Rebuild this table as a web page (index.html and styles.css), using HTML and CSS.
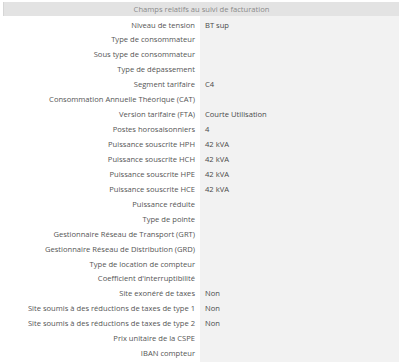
FILE: index.html
```html
<!DOCTYPE html>
<html lang="fr">
<head>
<meta charset="utf-8">
<link rel="stylesheet" href="styles.css">
</head>
<body>
<div class="panel">
  <div class="panel-header">Champs relatifs au suivi de facturation</div>
  <div class="fields">
    <div class="label">Niveau de tension</div><div class="value">BT sup</div>
    <div class="label">Type de consommateur</div><div class="value"></div>
    <div class="label">Sous type de consommateur</div><div class="value"></div>
    <div class="label">Type de dépassement</div><div class="value"></div>
    <div class="label">Segment tarifaire</div><div class="value">C4</div>
    <div class="label">Consommation Annuelle Théorique (CAT)</div><div class="value"></div>
    <div class="label">Version tarifaire (FTA)</div><div class="value">Courte Utilisation</div>
    <div class="label">Postes horosaisonniers</div><div class="value">4</div>
    <div class="label">Puissance souscrite HPH</div><div class="value">42 kVA</div>
    <div class="label">Puissance souscrite HCH</div><div class="value">42 kVA</div>
    <div class="label">Puissance souscrite HPE</div><div class="value">42 kVA</div>
    <div class="label">Puissance souscrite HCE</div><div class="value">42 kVA</div>
    <div class="label">Puissance réduite</div><div class="value"></div>
    <div class="label">Type de pointe</div><div class="value"></div>
    <div class="label">Gestionnaire Réseau de Transport (GRT)</div><div class="value"></div>
    <div class="label">Gestionnaire Réseau de Distribution (GRD)</div><div class="value"></div>
    <div class="label">Type de location de compteur</div><div class="value"></div>
    <div class="label">Coefficient d'interruptibilité</div><div class="value"></div>
    <div class="label">Site exonéré de taxes</div><div class="value">Non</div>
    <div class="label">Site soumis à des réductions de taxes de type 1</div><div class="value">Non</div>
    <div class="label">Site soumis à des réductions de taxes de type 2</div><div class="value">Non</div>
    <div class="label">Prix unitaire de la CSPE</div><div class="value"></div>
    <div class="label">IBAN compteur</div><div class="value"></div>
    <div class="label filler"></div><div class="value filler"></div>
  </div>
</div>
</body>
</html>
```
FILE: styles.css
```css
html, body {
  margin: 0;
  padding: 0;
  height: 100%;
  background: #ffffff;
}
body {
  font-family: "Open Sans", "DejaVu Sans", sans-serif;
  font-size: 7.6px;
  color: #555555;
}
.panel {
  box-sizing: border-box;
  height: 100%;
  padding: 2px 0 0 3px;
  display: flex;
  flex-direction: column;
}
.panel-header {
  height: 14px;
  line-height: 14px;
  background: #e3e3e3;
  border-left: 1px solid #d6d6d6;
  color: #8a8a8a;
  text-align: center;
  flex: none;
}
.fields {
  flex: 1;
  display: grid;
  grid-template-columns: 197px 1fr;
  grid-template-rows: repeat(23, 14.95px) 1fr;
  padding-top: 1.5px;
  background: linear-gradient(to right, transparent 197px, #f2f2f2 197px);
}
.label {
  text-align: right;
  padding-right: 5px;
  line-height: 14.95px;
  white-space: nowrap;
  color: #555555;
}
.value {
  background: #f2f2f2;
  padding-left: 5px;
  line-height: 14.95px;
  color: #4a4a4a;
  white-space: nowrap;
}
```
